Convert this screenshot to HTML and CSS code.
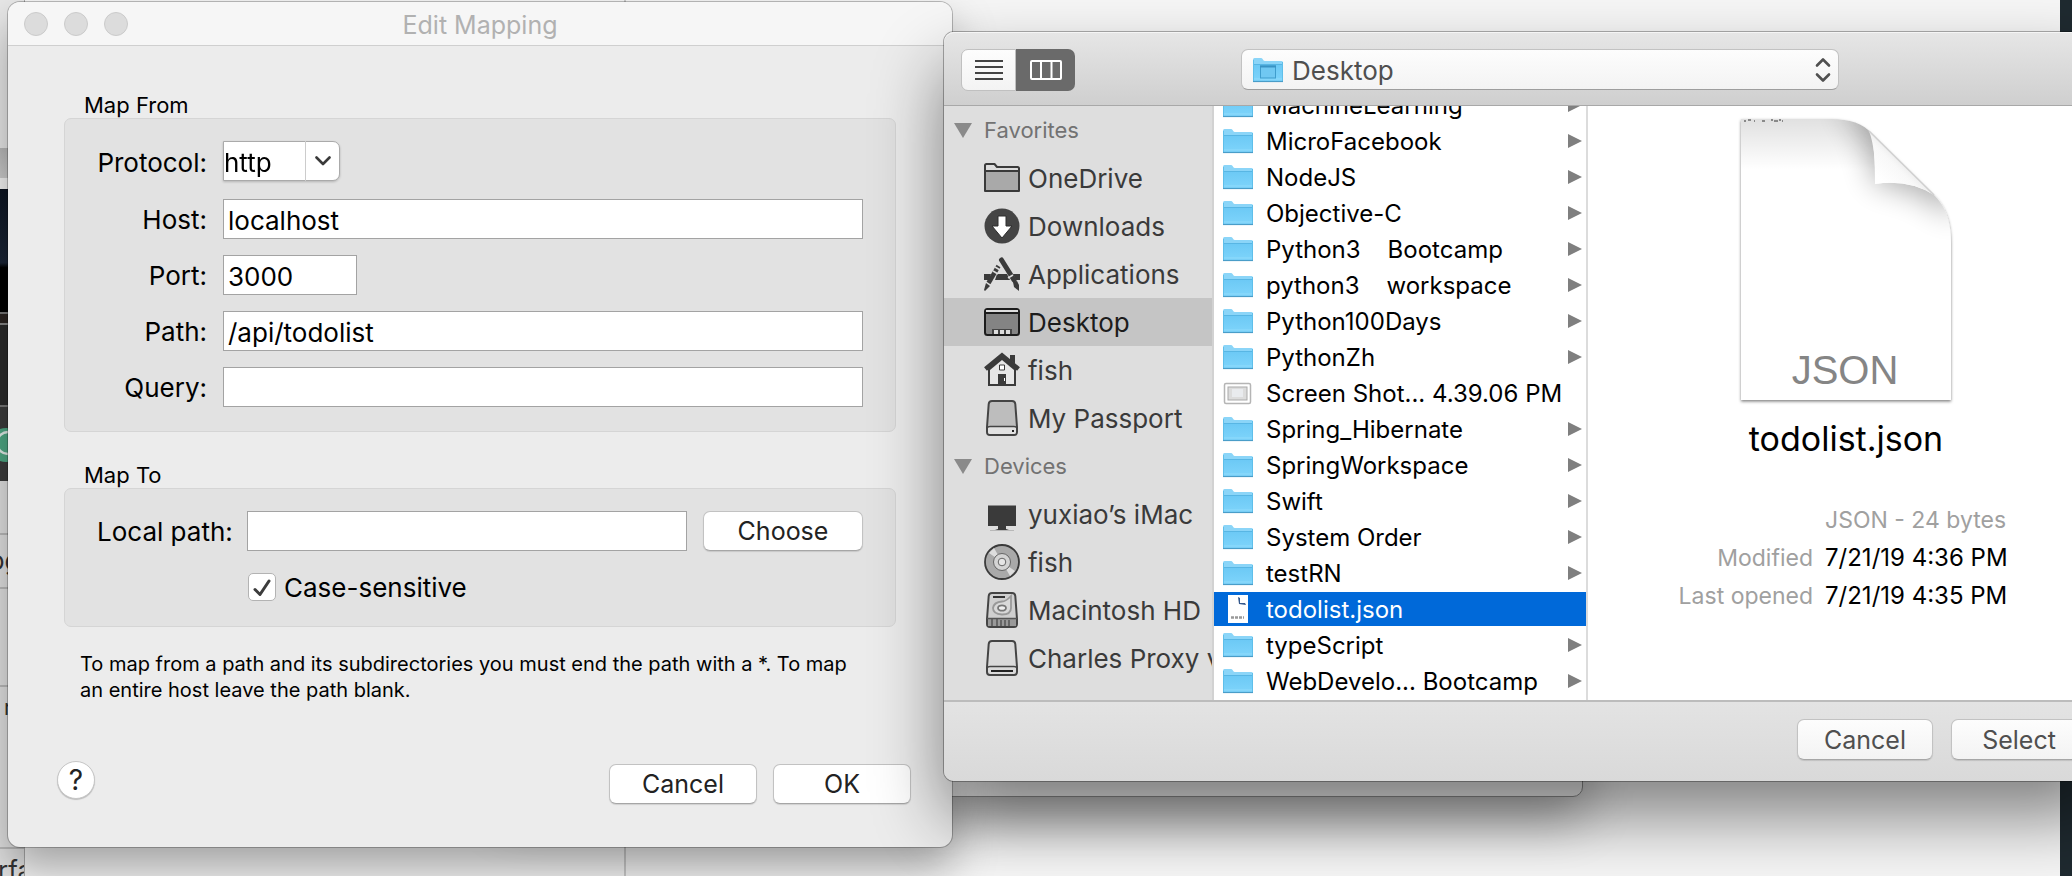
FILE: index.html
```html
<!DOCTYPE html>
<html lang="en">
<head>
<meta charset="utf-8">
<title>Edit Mapping</title>
<link rel="stylesheet" href="styles.css">
</head>
<body>
<svg class="defs" aria-hidden="true">
  <defs>
    <linearGradient id="folder-fill" x1="0" y1="0" x2="0" y2="1"><stop offset="0" stop-color="#6cc9f5"/><stop offset="1" stop-color="#7ed4fb"/></linearGradient>
    <symbol id="folder" viewBox="0 0 32 26">
      <path d="M1 2.500q0-1.500 1.500-1.500H9q1 0 1.600 1l.8 1.300q.4.700 1.400.7H29.500Q31 4 31 5.500V24H1z" fill="#8bd5f8"/>
      <path d="M1 7.500H31V24.200H1z" fill="url(#folder-fill)"/>
      <path d="M1 7.500H31" stroke="#58b6e4" stroke-width="1"/>
      <path d="M1.500 3V24M30.500 5V24" stroke="#5fbfea" stroke-width="1"/>
      <path d="M1 24.500H31" stroke="#4a9dc8" stroke-width="1.200"/>
      <path d="M2 22H30" stroke="#96ddfb" stroke-width=".8"/>
    </symbol>
    <symbol id="arrow" viewBox="0 0 14 14"><path d="M0 0L14 7 0 14z" fill="#7f7f7f"/></symbol>
  </defs>
</svg>
<main class="desktop">
  <div class="strip" aria-hidden="true">
    <div class="strip-top"></div>
    <div class="strip-bar"></div>
    <div class="strip-gap"></div>
    <div class="strip-photo"></div>
    <div class="strip-line"></div>
    <div class="strip-dark"></div>
    <div class="strip-badge"><svg viewBox="0 0 32 36"><circle cx="14" cy="18" r="17" fill="#4fa985"/><circle cx="16" cy="16" r="11" fill="none" stroke="#e2eee9" stroke-width="2.500"/></svg></div>
    <div class="strip-row strip-row-a">-</div>
    <div class="strip-row strip-row-a">og</div>
    <div class="strip-row strip-row-b"></div>
    <div class="strip-row strip-row-c">r</div>
    <div class="strip-row strip-row-d">rfa</div>
  </div>
  <div class="backdrop" aria-hidden="true"><div class="backdrop-side"></div></div>
  <div class="under-window" aria-hidden="true"></div>

  <section class="dialog" aria-labelledby="dialog-title">
    <header class="titlebar">
      <div class="lights"><button aria-label="Close"></button><button aria-label="Minimize"></button><button aria-label="Zoom"></button></div>
      <h1 id="dialog-title">Edit Mapping</h1>
    </header>
    <form class="dialog-body">
      <h2 class="group-title">Map From</h2>
      <div class="group group-from">
        <label for="protocol">Protocol:</label>
        <div class="combo">
          <select id="protocol"><option>http</option></select>
          <span class="combo-arrow"><svg viewBox="0 0 16 10"><path d="M1.500 1.500L8 8 14.500 1.500" fill="none" stroke="#3a3a3a" stroke-width="2.600" stroke-linecap="round" stroke-linejoin="round"/></svg></span>
        </div>
        <label for="host">Host:</label><input class="field" id="host" type="text" value="localhost">
        <label for="port">Port:</label><input class="field field-short" id="port" type="text" value="3000">
        <label for="path">Path:</label><input class="field" id="path" type="text" value="/api/todolist">
        <label for="query">Query:</label><input class="field" id="query" type="text">
      </div>
      <h2 class="group-title group-title-to">Map To</h2>
      <div class="group group-to">
        <label for="local">Local path:</label><input class="field" id="local" type="text">
        <button class="btn" type="button">Choose</button>
        <div class="check">
          <span class="check-box"><input type="checkbox" id="case" checked><svg viewBox="0 0 28 28"><path d="M7 16.500L12 21.500 21 8" fill="none" stroke="#3c3c3c" stroke-width="3" stroke-linecap="round" stroke-linejoin="round"/></svg></span>
          <label for="case">Case-sensitive</label>
        </div>
      </div>
      <p class="note">To map from a path and its subdirectories you must end the path with a *. To map<br>an entire host leave the path blank.</p>
      <footer class="dialog-actions">
        <button class="help" type="button" aria-label="Help">?</button>
        <button class="btn btn-cancel" type="button">Cancel</button>
        <button class="btn btn-ok" type="button">OK</button>
      </footer>
    </form>
  </section>

  <section class="chooser" aria-label="Choose a file">
    <header class="toolbar">
      <div class="views">
        <button class="view" aria-label="List view"><svg viewBox="0 0 28 22"><path d="M0 2H28M0 8H28M0 14H28M0 20H28" stroke="#444" stroke-width="2"/></svg></button>
        <button class="view view-on" aria-label="Column view"><svg viewBox="0 0 32 20"><path d="M1 2q0-1 1-1H30q1 0 1 1V18q0 1-1 1H2q-1 0-1-1zM11 1V19M21.500 1V19" fill="none" stroke="#fff" stroke-width="2"/></svg></button>
      </div>
      <div class="popup">
        <select aria-label="Folder"><option>Desktop</option></select>
        <svg class="popup-folder" viewBox="0 0 32 26"><use href="#folder"/><rect x="8.500" y="9" width="15" height="12" fill="#70c8f2" stroke="#3f9dcd"/><path d="M8 9.500H24" stroke="#3993c4" stroke-width="2"/></svg>
        <svg class="popup-arrows" viewBox="0 0 16 26"><path d="M2 8.500L8 2.500 14 8.500M2 17.500L8 23.500 14 17.500" fill="none" stroke="#505050" stroke-width="2.600" stroke-linecap="round" stroke-linejoin="round"/></svg>
      </div>
    </header>
    <div class="browser">
      <nav class="sidebar">
        <h3><svg viewBox="0 0 18 15"><path d="M0 0H18L9 15z" fill="#8a8a8a"/></svg>Favorites</h3>
        <a href="#"><svg viewBox="0 0 36 36"><path d="M1 31V5.500q0-1.500 1.500-1.500H10.500L13 7H33.500Q35 7 35 8.500V31z" fill="#dcdcdc" stroke="#3a3a3a" stroke-width="2" stroke-linejoin="round"/><path d="M2 11.500H34V30H2z" fill="#a9a9a9"/><path d="M1 11H35" stroke="#3a3a3a" stroke-width="2"/></svg>OneDrive</a>
        <a href="#"><svg viewBox="0 0 36 36"><circle cx="18" cy="18" r="17.500" fill="#444"/><path d="M14 8H22V18H28L18 30 8 18H14z" fill="#fff" stroke="#2c2c2c"/></svg>Downloads</a>
        <a href="#"><svg viewBox="0 0 36 36"><path d="M0 18H7L5 24H0zM13 18H23L26 24H11zM29 18H36V24H32z" fill="#3a3a3a"/><path d="M17.500 4L30 24" stroke="#3a3a3a" stroke-width="5" stroke-linecap="round"/><path d="M24 22L29 19" stroke="#ddd" stroke-width="1.500"/><path d="M29 26l4-1 2 4 0 6-5-4z" fill="#3a3a3a"/><path d="M14.500 10L4.500 27" stroke="#3a3a3a" stroke-width="4.500"/><path d="M11 11l6 3.500M9 15l5 3" stroke="#ddd" stroke-width="1.500"/><path d="M2 27l4 3-5 5-1-1z" fill="#3a3a3a"/></svg>Applications</a>
        <a href="#" class="on" aria-current="true"><svg viewBox="0 0 36 36"><rect x="1" y="5" width="34" height="26" rx="2.500" fill="#848484" stroke="#1c1c1c" stroke-width="2"/><path d="M2 6H34V8H2z" fill="#ddd"/><path d="M1 9H35" stroke="#1c1c1c" stroke-width="2"/><path d="M8 25H28V30H8z" fill="#444"/><path d="M10 26H14V30H10zM16 26H20V30H16zM22 26H26V30H22z" fill="#ddd"/></svg>Desktop</a>
        <a href="#"><svg viewBox="0 0 36 36"><path d="M18 3L32 15V34H4V15z" fill="#3a3a3a"/><path d="M18 8L30 18V32H6V18z" fill="#e6e6e6"/><path d="M1.500 17L18 3.500 34.500 17" fill="none" stroke="#3a3a3a" stroke-width="4.500"/><path d="M26 3H31V12L26 8z" fill="#3a3a3a"/><path d="M15.500 13H20.500V18H15.500z" fill="#fff" stroke="#3a3a3a"/><path d="M14 22H22V33H14z" fill="#3a3a3a"/><path d="M20.500 26V29" stroke="#fff"/></svg>fish</a>
        <a href="#"><svg viewBox="0 0 36 36"><path d="M8 1H28Q31 1 31.300 4L33 27V32Q33 35 30 35H6Q3 35 3 32V27L4.700 4Q5 1 8 1z" fill="#bdbdbd" stroke="#444" stroke-width="2"/><path d="M4 27H32V32Q32 34 30 34H6Q4 34 4 32z" fill="#e2e2e2"/><path d="M3 28Q4 26.500 6 26.500H30Q32 26.500 33 28" fill="none" stroke="#444" stroke-width="1.500"/><path d="M28 30H30V32H28z" fill="#222"/></svg>My Passport</a>
        <h3><svg viewBox="0 0 18 15"><path d="M0 0H18L9 15z" fill="#8a8a8a"/></svg>Devices</h3>
        <a href="#"><svg viewBox="0 0 36 36"><path d="M4 9.500H32V30H22V33L25 34H11L14 33V30H4z" fill="#3a3a3a"/><path d="M6 34.500H30" stroke="#b8b8b8"/></svg>yuxiao’s iMac</a>
        <a href="#"><svg viewBox="0 0 36 36"><circle cx="18" cy="18" r="17" fill="#a9a9a9" stroke="#3a3a3a" stroke-width="1.800"/><path d="M18 18L5 9 10 4zM18 18L31 27 26 32z" fill="#ddd"/><circle cx="18" cy="18" r="8.500" fill="#d4d4d4" stroke="#666"/><circle cx="18" cy="18" r="3.800" fill="#e6e6e6" stroke="#666"/></svg>fish</a>
        <a href="#"><svg viewBox="0 0 36 36"><path d="M8 1H28Q31 1 31.300 4L33 27V32Q33 35 30 35H6Q3 35 3 32V27L4.700 4Q5 1 8 1z" fill="#cfcfcf" stroke="#444" stroke-width="2"/><path d="M4 27H32V34H4z" fill="#999"/><path d="M3 26.500H33M8 27V34M13 27V34M17 28V34M21 28V34M25 28V34" stroke="#555" stroke-width="1.500"/><path d="M9 5H21" stroke="#333" stroke-width="2"/><path d="M27 4V16Q27 22.500 18 22.500 9 22 9 16 10 10 18 9.500 22 9.500 27 4z" fill="#d9d9d9" stroke="#999" stroke-width="1.800"/><ellipse cx="18" cy="16" rx="4" ry="2.700" fill="#eee" stroke="#777" stroke-width="1.800"/></svg>Macintosh HD</a>
        <a href="#"><svg viewBox="0 0 36 36"><path d="M8 1H28Q31 1 31.300 4L33 27V32Q33 35 30 35H6Q3 35 3 32V27L4.700 4Q5 1 8 1z" fill="#dadada" stroke="#444" stroke-width="2"/><path d="M3 28Q4 26.500 6 26.500H30Q32 26.500 33 28" fill="none" stroke="#444" stroke-width="1.500"/><path d="M7 31H29" stroke="#222" stroke-width="2"/></svg>Charles Proxy v</a>
      </nav>
      <ul class="files">
        <li><a href="#"><svg class="ico"><use href="#folder"/></svg><span>MachineLearning</span><svg class="arr"><use href="#arrow"/></svg></a></li>
        <li><a href="#"><svg class="ico"><use href="#folder"/></svg><span>MicroFacebook</span><svg class="arr"><use href="#arrow"/></svg></a></li>
        <li><a href="#"><svg class="ico"><use href="#folder"/></svg><span>NodeJS</span><svg class="arr"><use href="#arrow"/></svg></a></li>
        <li><a href="#"><svg class="ico"><use href="#folder"/></svg><span>Objective-C</span><svg class="arr"><use href="#arrow"/></svg></a></li>
        <li><a href="#"><svg class="ico"><use href="#folder"/></svg><span>Python3    Bootcamp</span><svg class="arr"><use href="#arrow"/></svg></a></li>
        <li><a href="#"><svg class="ico"><use href="#folder"/></svg><span>python3    workspace</span><svg class="arr"><use href="#arrow"/></svg></a></li>
        <li><a href="#"><svg class="ico"><use href="#folder"/></svg><span>Python100Days</span><svg class="arr"><use href="#arrow"/></svg></a></li>
        <li><a href="#"><svg class="ico"><use href="#folder"/></svg><span>PythonZh</span><svg class="arr"><use href="#arrow"/></svg></a></li>
        <li><a href="#"><svg class="ico" viewBox="0 0 32 26"><rect x="2.500" y="3.500" width="26" height="20" rx="1.500" fill="#fff" stroke="#b5b5b5" stroke-width="1.500"/><rect x="6" y="7" width="19" height="13" fill="#dcdcdc" stroke="#aaa"/><rect x="10" y="9" width="11" height="8" fill="#e9ebee"/></svg><span>Screen Shot... 4.39.06 PM</span></a></li>
        <li><a href="#"><svg class="ico"><use href="#folder"/></svg><span>Spring_Hibernate</span><svg class="arr"><use href="#arrow"/></svg></a></li>
        <li><a href="#"><svg class="ico"><use href="#folder"/></svg><span>SpringWorkspace</span><svg class="arr"><use href="#arrow"/></svg></a></li>
        <li><a href="#"><svg class="ico"><use href="#folder"/></svg><span>Swift</span><svg class="arr"><use href="#arrow"/></svg></a></li>
        <li><a href="#"><svg class="ico"><use href="#folder"/></svg><span>System Order</span><svg class="arr"><use href="#arrow"/></svg></a></li>
        <li><a href="#"><svg class="ico"><use href="#folder"/></svg><span>testRN</span><svg class="arr"><use href="#arrow"/></svg></a></li>
        <li><a href="#" class="on" aria-current="true"><svg class="ico ico-doc" viewBox="0 0 32 30"><path d="M6 1H26V29H6z" fill="#fff"/><path d="M16 3L18 4V9H23L24 11 17 10z" fill="#34588c"/><path d="M9 23.500H22" stroke="#999" stroke-width="2.500" stroke-dasharray="3 1"/></svg><span>todolist.json</span></a></li>
        <li><a href="#"><svg class="ico"><use href="#folder"/></svg><span>typeScript</span><svg class="arr"><use href="#arrow"/></svg></a></li>
        <li><a href="#"><svg class="ico"><use href="#folder"/></svg><span>WebDevelo... Bootcamp</span><svg class="arr"><use href="#arrow"/></svg></a></li>
      </ul>
      <div class="preview">
        <svg class="page" viewBox="-6 -4 222 296">
          <defs>
            <linearGradient id="page-top" x1="0" y1="0" x2="0" y2="1"><stop offset="0" stop-color="#000" stop-opacity=".12"/><stop offset=".18" stop-color="#000" stop-opacity="0"/></linearGradient>
            <linearGradient id="curl" gradientUnits="userSpaceOnUse" x1="163" y1="40" x2="141" y2="62"><stop offset="0" stop-color="#e9e9e9"/><stop offset=".35" stop-color="#f8f8f8"/><stop offset="1" stop-color="#fff"/></linearGradient>
            <filter id="soft" x="-60%" y="-60%" width="220%" height="220%"><feGaussianBlur stdDeviation="15"/></filter>
            <filter id="drop" x="-10%" y="-10%" width="120%" height="120%"><feDropShadow dx="0" dy="1.500" stdDeviation="1.500" flood-opacity=".5"/></filter>
            <clipPath id="page-clip"><path d="M0 0H90Q118 0 130 14Q134 26 134 65Q168 60 193 76Q210 92 210 124V281H0z"/></clipPath>
          </defs>
          <path d="M0 0H90Q116 0 130 14L193 76Q210 92 210 124V281H0z" fill="#fff" filter="url(#drop)"/>
          <g clip-path="url(#page-clip)">
            <path d="M0 0H210V281H0z" fill="url(#page-top)"/>
            <path d="M96 -14Q128 4 134 65Q176 66 214 100L220 -20z" fill="#000" opacity=".32" filter="url(#soft)"/>
          </g>
          <path d="M128 12Q135 30 134 65Q168 60 193 76z" fill="url(#curl)"/>
          <path d="M128 12L193 76" stroke="#d0d0d0" stroke-width="1.500"/>
          <path d="M3 2h2m2-1h3m3 1h1m7 0h3m6-1h2m1 1h4m1-1h2m1 1h1" stroke="#333" stroke-width="1"/>
          <text x="104" y="265" text-anchor="middle">JSON</text>
        </svg>
        <h2>todolist.json</h2>
        <dl>
          <dt></dt><dd class="kind">JSON - 24 bytes</dd>
          <dt>Modified</dt><dd>7/21/19 4:36 PM</dd>
          <dt>Last opened</dt><dd>7/21/19 4:35 PM</dd>
        </dl>
      </div>
    </div>
    <footer class="chooser-actions">
      <button class="btn btn-soft" type="button">Cancel</button>
      <button class="btn btn-soft" type="button">Select</button>
    </footer>
  </section>
</main>
</body>
</html>
```
FILE: styles.css
```css
* { box-sizing: border-box; }

body {
  margin: 0;
  font-family: Inter, "Liberation Sans", sans-serif;
  font-size: 26px;
  color: #000;
}

h1, h2, h3, p, ul, dl, dd { margin: 0; padding: 0; font-weight: 400; }
ul { list-style: none; }
a { color: inherit; text-decoration: none; }
button, input, select { font: inherit; color: inherit; margin: 0; }
svg { display: block; flex: none; }
.defs { position: absolute; width: 0; height: 0; }

.desktop {
  position: relative;
  height: 100vh;
  overflow: hidden;
  background: #1f2a30;
}

/* Windows behind the dialogs */
.strip {
  position: absolute;
  top: 0;
  bottom: 0;
  left: 0;
  width: 24px;
  display: flex;
  flex-direction: column;
  overflow: hidden;
  background: #e2e2e2;
  color: #333;
}
.strip > * { flex: none; }
.strip-top { height: 148px; background: #e8e8e8; }
.strip-bar { height: 30px; background: linear-gradient(#b8b8b8, #ccc); }
.strip-gap { height: 11px; background: #f4f4f4; }
.strip-photo { height: 123px; background: linear-gradient(#0d1522, #1b2536 60%, #000 64%); }
.strip-line { height: 13px; background: #2b2421; border-top: 2px solid #777; border-bottom: 2px solid #888; }
.strip-dark { height: 82px; background: #2b2b2b; border-bottom: 2px solid #777; }
.strip-badge { height: 74px; background: #3c3c3c; padding-top: 20px; }
.strip-badge svg { width: 32px; height: 36px; margin-left: -8px; }
.strip-row { border-bottom: 2px solid #bbb; white-space: nowrap; line-height: 52px; }
.strip-row-a { height: 54px; text-indent: -11px; }
.strip-row-b { height: 98px; }
.strip-row-c { height: 162px; font-size: 21px; line-height: 42px; text-indent: 4px; }
.strip-row-d { height: 48px; text-indent: -2px; line-height: 44px; }

.backdrop {
  position: absolute;
  top: 0;
  bottom: 0;
  left: 24px;
  right: 12px;
  background: #f6f6f6;
  border-left: 1px solid #aaa;
  display: flex;
}
.backdrop-side { width: 601px; border-right: 2px solid #ccc; }

.under-window {
  position: absolute;
  left: 500px;
  top: 200px;
  width: 1083px;
  height: 597px;
  border: 1px solid #888;
  border-radius: 10px;
  background: #ececec;
  box-shadow: 0 22px 50px rgba(0, 0, 0, .3);
}

/* Edit Mapping dialog */
.dialog {
  position: absolute;
  left: 8px;
  top: 2px;
  width: 944px;
  border-radius: 12px;
  background: #ececec;
  box-shadow: 0 0 0 1px rgba(0, 0, 0, .24), 0 22px 44px rgba(0, 0, 0, .34);
}
.titlebar {
  display: grid;
  grid-template-columns: 1fr auto 1fr;
  align-items: center;
  height: 44px;
  padding: 0 16px;
  border-bottom: 1px solid #cfcfcf;
  border-radius: 12px 12px 0 0;
  background: #f6f6f6;
}
.titlebar h1 { padding-top: 2px; font-size: 25px; line-height: 32px; color: #b1b1b1; }
.lights { display: flex; gap: 16px; }
.lights button {
  width: 24px;
  height: 24px;
  padding: 0;
  border: 1px solid #cbcbcb;
  border-radius: 50%;
  background: #dcdcdc;
}
.dialog-body { padding: 46px 41px 43px 34px; }
.group-title { margin-left: 42px; font-size: 22px; line-height: 26px; }
.group-title-to { margin-top: 30px; }
.group {
  margin: 0 15px 0 22px;
  border: 1px solid #d5d5d5;
  border-radius: 7px;
  background: #e2e2e2;
  display: grid;
  column-gap: 16px;
  align-items: center;
}
.group-from {
  grid-template-columns: 142px 1fr;
  grid-template-rows: 42px;
  grid-auto-rows: 40px;
  row-gap: 16px;
  padding: 22px 32px 24px 0;
}
.group-from > label { text-align: right; }
.group-to {
  grid-template-columns: 134px 1fr 160px;
  grid-template-rows: 40px 32px;
  row-gap: 20px;
  padding: 22px 32px 23px;
}
.group-to > label { white-space: nowrap; }
.field {
  width: 100%;
  height: 40px;
  padding: 3px 4px 0;
  border: 1px solid #a3a3a3;
  border-radius: 0;
  background: #fff;
}
.field-short { width: 134px; }
.combo { display: grid; align-self: start; width: 117px; height: 40px; filter: drop-shadow(0 1px 1px rgba(0, 0, 0, .2)); }
.combo select, .combo-arrow { grid-area: 1 / 1; }
.combo select {
  appearance: none;
  padding: 3px 0 0;
  border: 1px solid #aaa;
  border-radius: 0 7px 7px 0;
  background: #fff;
}
.combo-arrow {
  justify-self: end;
  display: grid;
  place-items: center;
  width: 35px;
  border-left: 1px solid #ccc;
  pointer-events: none;
}
.combo-arrow svg { width: 16px; height: 10px; }
.check { grid-column: 2 / 4; display: flex; align-items: center; gap: 8px; padding-left: 1px; }
.check-box { display: grid; }
.check-box > * { grid-area: 1 / 1; width: 28px; height: 28px; }
.check-box input {
  appearance: none;
  border: 1px solid #b3b3b3;
  border-radius: 5px;
  background: #fff;
}
.check-box svg { pointer-events: none; }
.note { margin: 24px 0 0 38px; font-size: 20px; line-height: 26px; white-space: nowrap; }

.btn {
  height: 40px;
  padding: 0;
  border: 1px solid #c2c2c2;
  border-bottom-color: #a6a6a6;
  border-radius: 7px;
  background: #fff;
  color: #222;
  font-size: 25px;
  box-shadow: 0 1px 1px rgba(0, 0, 0, .12);
}
.dialog-actions { display: flex; align-items: flex-end; gap: 16px; margin-top: 58px; padding-left: 15px; }
.help {
  width: 38px;
  height: 38px;
  margin: 0 auto 5px 0;
  padding: 0;
  border: 1px solid #c6c6c6;
  border-radius: 50%;
  background: #fff;
  color: #222;
  font-size: 28px;
  box-shadow: 0 1px 1px rgba(0, 0, 0, .2);
}
.btn-cancel { width: 148px; }
.btn-ok { width: 138px; }

/* File chooser */
.chooser {
  position: absolute;
  left: 944px;
  right: -32px;
  top: 32px;
  display: flex;
  flex-direction: column;
  border-radius: 10px;
  background: #e2e2e2;
  box-shadow: 0 0 0 1px rgba(0, 0, 0, .3), 0 36px 70px rgba(0, 0, 0, .48);
}
.toolbar {
  display: flex;
  align-items: center;
  height: 74px;
  padding: 2px 18px 0 17px;
  border-bottom: 1px solid #a8a8a8;
  border-radius: 10px 10px 0 0;
  background: linear-gradient(#e6e6e6, #cfcfcf);
  box-shadow: inset 0 1px 0 #f5f5f5;
}
.views { display: flex; width: 114px; margin-right: 166px; }
.view {
  display: grid;
  place-items: center;
  width: 55px;
  height: 42px;
  padding: 0;
  border: 1px solid #c0c0c0;
  border-radius: 7px 0 0 7px;
  background: linear-gradient(#fdfdfd, #f3f3f3);
}
.view svg { width: 28px; height: 22px; }
.view-on { width: 59px; border: 0; border-radius: 0 7px 7px 0; background: #6a6a6a; }
.view-on svg { width: 32px; height: 20px; }
.popup { display: grid; align-items: center; width: 598px; }
.popup > * { grid-area: 1 / 1; }
.popup select {
  appearance: none;
  width: 100%;
  height: 41px;
  padding: 2px 50px 0;
  border: 1px solid #c2c2c2;
  border-bottom-color: #9d9d9d;
  border-radius: 7px;
  background: linear-gradient(#fdfdfd, #f3f3f3);
  color: #4f4f4f;
}
.popup svg { pointer-events: none; }
.popup-folder { width: 32px; height: 26px; margin-left: 11px; }
.popup-arrows { width: 16px; height: 26px; margin-right: 8px; justify-self: end; }

.browser {
  display: grid;
  grid-template-columns: 270px 374px 1fr;
  height: 594px;
  overflow: hidden;
  background: #fff;
}
.sidebar { overflow: hidden; border-right: 2px solid #d2d2d2; background: #dedede; color: #3a3a3a; }
.sidebar h3 {
  display: flex;
  align-items: center;
  gap: 12px;
  height: 48px;
  padding-left: 10px;
  font-size: 22px;
  color: #727272;
}
.sidebar h3 svg { width: 18px; height: 15px; }
.sidebar a {
  display: flex;
  align-items: center;
  gap: 8px;
  height: 48px;
  padding-left: 40px;
  white-space: nowrap;
}
.sidebar a svg { width: 36px; height: 36px; }
.sidebar .on { background: #c5c5c5; color: #1c1c1c; }

.files { margin-top: -18px; border-right: 2px solid #dcdcdc; font-size: 24px; }
.files li { height: 36px; }
.files a {
  display: flex;
  align-items: center;
  height: 34px;
  padding: 0 4px 0 8px;
  white-space: pre;
}
.files .on { background: #0069d9; color: #fff; }
.files span { flex: 1; margin-left: 12px; }
.ico { width: 32px; height: 26px; }
.ico-doc { height: 30px; }
.arr { width: 14px; height: 14px; }

.preview { display: flex; flex-direction: column; align-items: center; padding-top: 9px; }
.page { width: 222px; height: 296px; }
.page text { font-family: "Liberation Sans", Arial, sans-serif; font-size: 40px; fill: #858585; }
.preview h2 { margin-top: 8px; font-size: 34px; line-height: 40px; }
.preview dl {
  display: grid;
  grid-template-columns: 225px 1fr;
  column-gap: 12px;
  align-self: stretch;
  margin-top: 42px;
  font-size: 24px;
  line-height: 38px;
}
.preview dt { text-align: right; }
.preview dt, .preview .kind { font-size: 23px; color: #a0a0a0; }

.chooser-actions {
  display: flex;
  justify-content: flex-end;
  gap: 18px;
  height: 81px;
  padding: 17px 17px 0;
  border-top: 2px solid #bcbcbc;
  border-radius: 0 0 10px 10px;
  background: linear-gradient(#e3e3e3, #d9d9d9);
}
.btn-soft { width: 136px; height: 41px; background: linear-gradient(#fdfdfd, #f3f3f3); color: #4f4f4f; }
```
